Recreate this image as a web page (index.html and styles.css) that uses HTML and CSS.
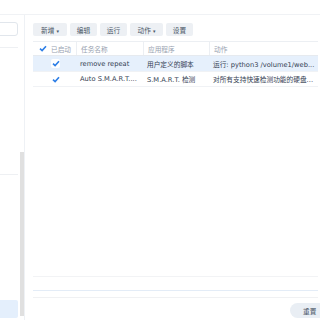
FILE: index.html
```html
<!DOCTYPE html>
<html>
  <head>
    <meta charset="UTF-8">
    <title>任务计划</title>
<link rel="stylesheet" href="styles.css">
  </head>
  <body>
    <div class="top"></div>
    <div class="main">
      <aside class="side">
        <div class="side-list">
          <div class="search"></div>
          <div class="rule first"></div>
          <div class="grow"></div>
          <div class="rule"></div>
          <div class="grow"></div>
          <div class="picked"></div>
        </div>
        <div class="scroll"><div class="thumb"></div></div>
      </aside>
      <section class="content">
        <div class="toolbar">
          <button class="btn w34">新增 <span class="caret">▾</span></button>
          <button class="btn w27">编辑</button>
          <button class="btn w27">运行</button>
          <button class="btn w33">动作 <span class="caret">▾</span></button>
          <button class="btn w27">设置</button>
        </div>
        <div class="grid">
          <div class="row head">
            <div class="cell c1"><span class="tick small"><svg width="8" height="7" viewBox="0 0 8 7"><path d="M1 3.6 L3.1 5.6 L7 1.2" fill="none" stroke="#2d7ee6" stroke-width="1.6"/></svg></span>已启动</div>
            <div class="cell c2">任务名称</div>
            <div class="cell c3">应用程序</div>
            <div class="cell c4">动作</div>
          </div>
          <div class="row sel">
            <div class="cell c1"><span class="tick"><svg width="8" height="7" viewBox="0 0 8 7"><path d="M1 3.6 L3.1 5.6 L7 1.2" fill="none" stroke="#2d7ee6" stroke-width="1.6"/></svg></span></div>
            <div class="cell c2">remove repeat</div>
            <div class="cell c3">用户定义的脚本</div>
            <div class="cell c4">运行: python3 /volume1/web...</div>
          </div>
          <div class="row">
            <div class="cell c1"><span class="tick"><svg width="8" height="7" viewBox="0 0 8 7"><path d="M1 3.6 L3.1 5.6 L7 1.2" fill="none" stroke="#2d7ee6" stroke-width="1.6"/></svg></span></div>
            <div class="cell c2">Auto S.M.A.R.T....</div>
            <div class="cell c3">S.M.A.R.T. 检测</div>
            <div class="cell c4">对所有支持快速检测功能的硬盘...</div>
          </div>
        </div>
        <div class="grow"></div>
        <div class="foot">
          <div class="gap13"></div>
          <div class="gap6"></div>
          <div class="foot-bar">
            <button class="reset">重置</button>
          </div>
        </div>
      </section>
    </div>
  </body>
</html>
```

FILE: styles.css
```css
body, html {
  margin: 0;
}

body {
  width: 320px;
  height: 320px;
  overflow: hidden;
  background: #fff;
  font-family: "DejaVu Sans", "Noto Sans CJK SC", sans-serif;
  font-size: 6.7px;
  color: #334052;
}

.top {
  height: 14px;
  border-bottom: 1px solid #f0f2f5;
}

.main {
  display: flex;
  height: 305px;
}

.side {
  display: flex;
  width: 24px;
  border-right: 1px solid #eef1f5;
}

.side-list {
  display: flex;
  flex-direction: column;
  width: 20px;
}

.search {
  margin: 7px 0 0 -10px;
  width: 26px;
  height: 12px;
  border: 1px solid #e1e6ec;
  border-radius: 3px;
}

.rule {
  height: 1px;
  width: 18px;
  background: #eef0f3;
}

.rule.first {
  margin-top: 11px;
}

.grow {
  flex: 1;
}

.picked {
  width: 18px;
  height: 18px;
  margin-bottom: 2px;
  background: #e4effc;
  border-radius: 0 2px 2px 0;
}

.scroll {
  width: 4px;
}

.thumb {
  margin-top: 137px;
  height: 164px;
  background: #e0e0e0;
}

.content {
  flex: 1;
  display: flex;
  flex-direction: column;
  padding: 8px 2px 0 8px;
}

.toolbar {
  display: flex;
  gap: 3px;
}

.btn {
  height: 13px;
  padding: 0;
  border: 0;
  border-radius: 2px;
  background: #edf0f4;
  color: #4a5666;
  font-family: inherit;
  font-size: 6.7px;
}

.w34 { width: 34px; }
.w27 { width: 27px; }
.w33 { width: 33px; }

.caret {
  font-size: 5px;
}

.grid {
  margin-top: 5px;
}

.row {
  display: flex;
  height: 14px;
  align-items: center;
  border-bottom: 1px solid #f0f2f5;
}

.row.head {
  height: 13px;
  border-top: 1px solid #eceff3;
  border-bottom: 1px solid #e6eaef;
  color: #97a2b0;
}

.row.sel {
  height: 15px;
  background: #e6f0fc;
}

.cell {
  height: 100%;
  display: flex;
  align-items: center;
  padding-left: 4px;
  box-sizing: border-box;
  white-space: nowrap;
  overflow: hidden;
}

.head .cell + .cell {
  border-left: 1px solid #eceff3;
}

.c1 { width: 43px; padding-left: 5px; }
.c2 { width: 67px; }
.c3 { width: 66px; }
.c4 { flex: 1; }

.tick {
  display: inline-flex;
  align-items: center;
  justify-content: center;
  width: 9px;
  height: 9px;
  margin-left: 13px;
  background: #fff;
  border-radius: 2px;
}

.tick.small {
  margin: 0 4px 0 0;
}

.foot {
  border-top: 1px solid #f2f3f5;
}

.gap13 {
  height: 13px;
  border-bottom: 1px solid #e3ecf7;
}

.gap6 {
  height: 6px;
  border-bottom: 1px solid #f0f1f3;
}

.foot-bar {
  display: flex;
  justify-content: flex-end;
  padding: 5px 0 2px;
}

.reset {
  width: 40px;
  height: 15px;
  margin-right: -12px;
  padding: 0 0 0 13px;
  border: 0;
  border-radius: 8px 0 0 8px;
  background: #e9eef4;
  color: #4a5666;
  font-family: inherit;
  font-size: 6.7px;
  text-align: left;
}
```
